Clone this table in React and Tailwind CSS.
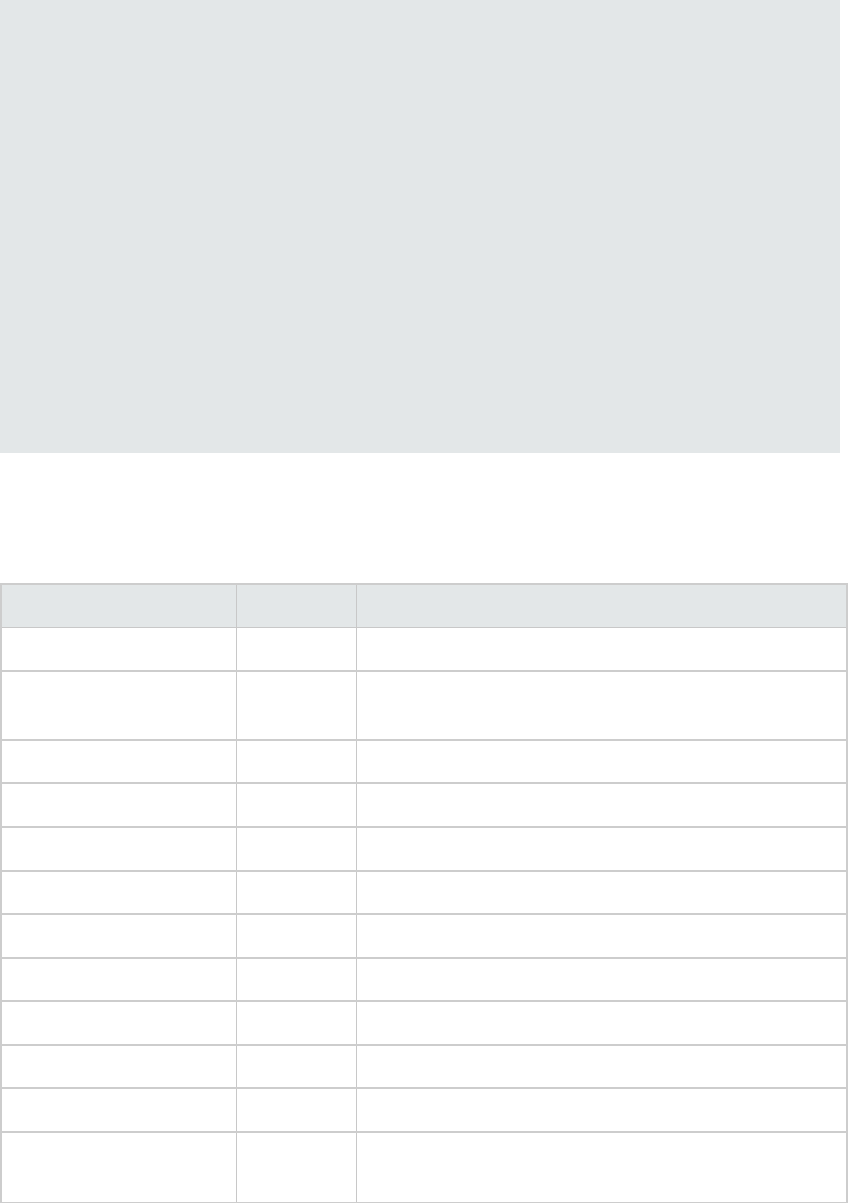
import React from "react";

const rows = [43.5, 69, 43.5, 43.5, 44, 43.5, 43.5, 43.5, 43.5, 43.5, 43.5, 69];

export default function App() {
  return (
    <div className="bg-white w-[848px] min-h-[1203px] font-['Liberation_Sans',sans-serif]">
      <div className="w-[840px] h-[453px] bg-[#e3e7e8]" />
      <div className="mt-[130px] w-[848px] border-2 border-[#cdcdcd]">
        <div className="flex h-[43px] bg-[#e3e7e8] border-b border-[#c8c8c8]">
          <div className="w-[235px] border-r border-[#c8c8c8]" />
          <div className="w-[120px] border-r border-[#c8c8c8]" />
          <div className="flex-1" />
        </div>
        {rows.map((h, i) => (
          <div
            key={i}
            className={"flex " + (i < rows.length - 1 ? "border-b-2 border-[#cdcdcd]" : "")}
            style={{ height: h }}
          >
            <div className="w-[235px] border-r border-[#c8c8c8]" />
            <div className="w-[120px] border-r border-[#c8c8c8]" />
            <div className="flex-1" />
          </div>
        ))}
      </div>
    </div>
  );
}
